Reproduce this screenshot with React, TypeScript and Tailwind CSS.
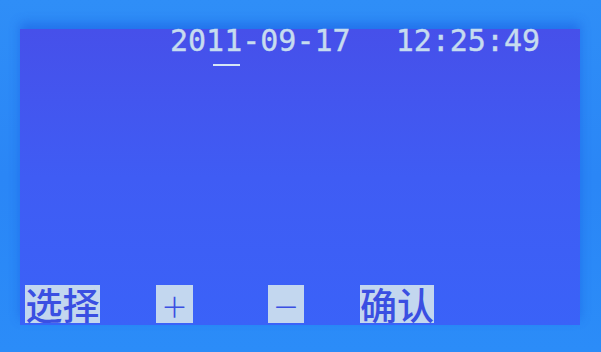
import React from 'react';

const mono = { fontFamily: '"DejaVu Sans Mono", "Liberation Mono", monospace' };
const cjk = { fontFamily: '"Noto Sans CJK SC", "Noto Sans", sans-serif' };

const KeyLabel = ({ children, className = '' }: { children: React.ReactNode; className?: string }) => (
  <div
    className={`flex h-[38px] items-center justify-center bg-[#c3d7ef] text-[#3a4fe2] leading-none ${className}`}
    style={cjk}
  >
    {children}
  </div>
);

const App = () => {
  return (
    <div className="h-[352px] w-[601px] overflow-hidden bg-[#2b8bf8] bg-gradient-to-b from-[#2f8ef7] via-[#2a86f6] to-[#2b8cf8] pt-[29px] pl-[20px]">
      {/* LCD panel */}
      <div className="flex h-[296px] w-[560px] flex-col bg-gradient-to-b from-[#4650ea] via-[#3f5cf4] to-[#3a62f8] shadow-[0_-6px_10px_rgba(20,80,220,0.45)]">
        {/* date / time */}
        <div className="-mt-[3px] flex items-start text-[30px] leading-[30px] text-[#c6dcef] [-webkit-text-stroke:0.4px_#c6dcef]" style={mono}>
          <span className="ml-[150px] relative">
            201
            <span className="relative">
              1
              <span className="absolute left-[-11px] top-[41px] h-[2px] w-[27px] bg-[#d6e6f5]" />
            </span>
            -09-17
          </span>
          <span className="ml-[45px]">12:25:49</span>
        </div>

        <div className="flex-1" />

        {/* soft keys */}
        <div className="mb-[2px] flex items-end pl-[5px]">
          <KeyLabel className="w-[75px] text-[37px] font-medium">选择</KeyLabel>
          <KeyLabel className="ml-[56px] w-[37px] text-[44px] font-thin">+</KeyLabel>
          <KeyLabel className="ml-[75px] w-[36px] text-[44px] font-thin">−</KeyLabel>
          <KeyLabel className="ml-[56px] w-[74px] text-[37px] font-medium">确认</KeyLabel>
        </div>
      </div>
    </div>
  );
};

export default App;
